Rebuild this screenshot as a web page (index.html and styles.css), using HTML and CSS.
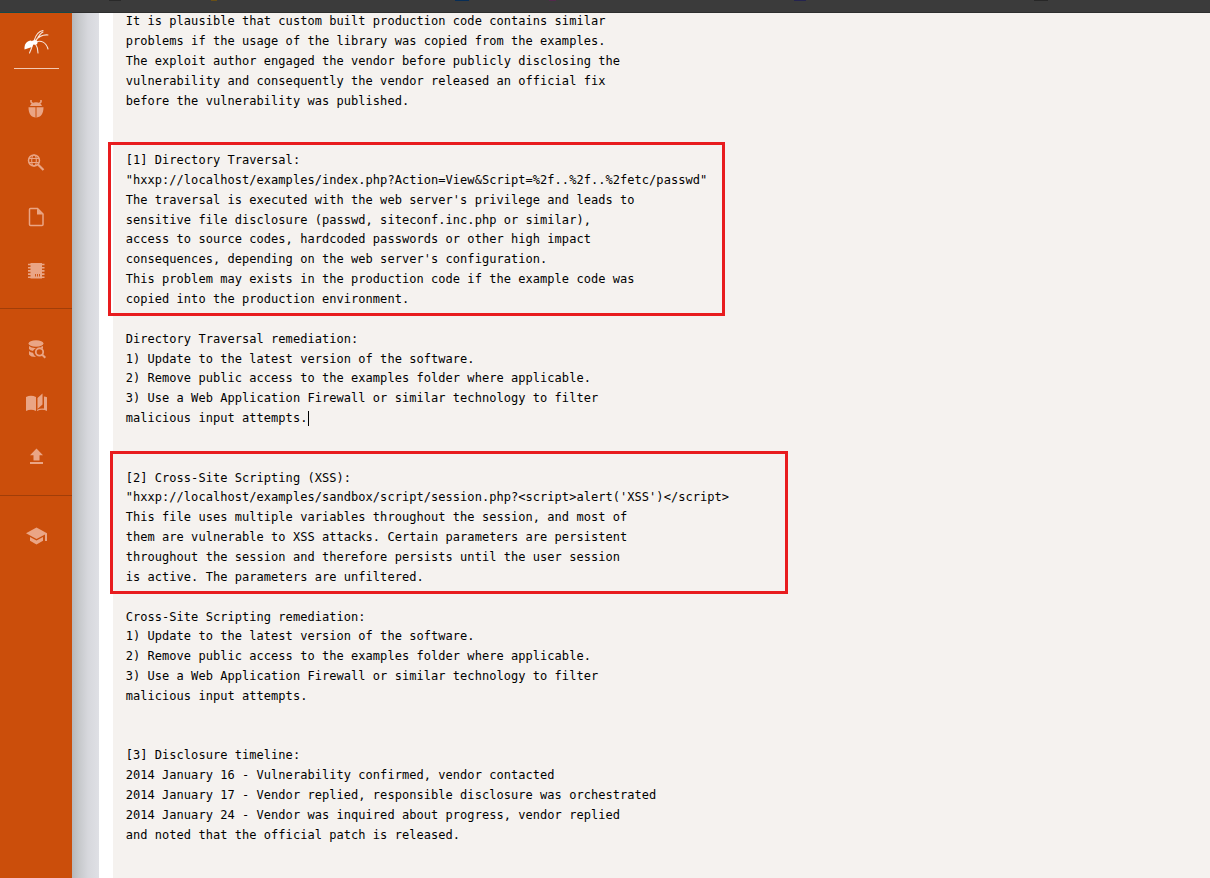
FILE: index.html
```html
<!DOCTYPE html>
<html lang="en">

	<head>
		<meta charset="UTF-8">
		<title>Advisory</title>
		<link rel="stylesheet" href="styles.css">
	</head>

	<body>
		<div class="topbar">
			<i class="tab tab-grey"></i>
			<i class="tab tab-yellow"></i>
			<i class="tab tab-blue"></i>
			<i class="tab tab-pink"></i>
			<i class="tab tab-navy"></i>
			<i class="tab tab-dark"></i>
		</div>
		<div class="page">
			<div class="sidebar">
				<a class="logo" href="#">
					<svg width="28" height="26" viewBox="0 0 28 26" fill="none" stroke="#fff" stroke-linecap="round">
						<path d="M1.500 20.500C1 15 4 11.500 8 11.500L11 14 9 18 6 19z" fill="#fff" stroke="none" />
						<ellipse cx="11.500" cy="13.500" rx="3" ry="2.200" fill="#fff" stroke="none" />
						<path d="M11 12C13 5 16 2 20 1.500M12 12C16 7 20 5.500 25 6M13 13C18 11 23 13 25 20M12 14C14 17 15 20 15 24M10 14C9 18 8 21 6.500 24M13 12C15 8 17 4 20 3" stroke-width="1.100" opacity=".85" />
					</svg>
				</a>
				<ul class="menu">
					<li>
						<svg width="22" height="22" viewBox="0 0 22 22">
							<path d="M3.500 9.200H18.500C18.500 15.500 16 19.500 11 19.500S3.500 15.500 3.500 9.200zM5 8C6 5.500 8 4.300 11 4.300S16 5.500 17 8z" />
							<path d="M6 2V4L8 5.800M16 2V4L14 5.800" fill="none" stroke="#eaa585" stroke-width="1.600" />
							<path d="M11 9V19.500" stroke="#cb4e0b" stroke-width="1" />
						</svg>
					</li>
					<li>
						<svg class="outline" width="22" height="22" viewBox="0 0 22 22">
							<circle cx="9" cy="8.500" r="5.500" stroke-width="1.500" />
							<ellipse cx="9" cy="8.500" rx="2.300" ry="5.500" stroke-width="1.100" />
							<path d="M4 6.500H14M4 10.500H14" stroke-width="1.100" />
							<path d="M13 12.500L18.500 18" stroke-width="2.200" />
						</svg>
					</li>
					<li>
						<svg width="22" height="22" viewBox="0 0 22 22">
							<path d="M5.500 2.500H12.500L18 8V18.500Q18 19.500 17 19.500H5.500Q4.500 19.500 4.500 18.500V3.500Q4.500 2.500 5.500 2.500z" fill="none" stroke="#eaa585" stroke-width="1.500" />
							<path d="M12 2.500V8.500H18z" />
						</svg>
					</li>
					<li>
						<svg width="22" height="22" viewBox="0 0 22 22">
							<path d="M5.500 3H17V18.500H5.500z" />
							<path d="M3 4.500H19.500M3 7.700H19.500M3 10.900H19.500M3 14.100H19.500M3 17.300H19.500" stroke="#eaa585" stroke-width="1.600" />
							<path d="M10.500 14V16.500M12.500 14V16.500M14.500 14V16.500" stroke="#cb4e0b" stroke-width=".9" />
						</svg>
					</li>
				</ul>
				<ul class="menu">
					<li>
						<svg width="22" height="22" viewBox="0 0 22 22">
							<ellipse cx="11" cy="5.500" rx="7.500" ry="3.300" />
							<path d="M4 8Q7 10.500 11 10Q8.500 11.500 8 13Q5 12.500 4 11zM4 13Q5.500 14.500 8 14.700Q8.500 17 11 19Q5.500 19 4 16.500z" />
							<circle cx="14.500" cy="14" r="3.700" fill="none" stroke="#eaa585" stroke-width="1.800" />
							<path d="M17 16.500L20.300 19.800" stroke="#eaa585" stroke-width="2" />
							<path d="M11.500 9.800Q15 9.700 18 8V11Q15.500 8.500 11.500 9.800z" />
						</svg>
					</li>
					<li>
						<svg width="22" height="22" viewBox="0 0 22 22">
							<path d="M1 5Q6 2.500 11 5V19Q6 16.500 1 19zM12.500 6L17.500 1.500V12.500L12.500 17z" />
							<path d="M19 4.500Q20.500 4.500 22 5.300V19Q17 16.500 12 19V17.800Q15 16 19 16.500z" />
						</svg>
					</li>
					<li>
						<svg width="22" height="22" viewBox="0 0 22 22">
							<path d="M11.500 2.500L18 9.300H14.500V14.500H8.500V9.300H5zM5 16H18V18H5z" />
						</svg>
					</li>
				</ul>
				<ul class="menu">
					<li>
						<svg width="22" height="22" viewBox="0 0 22 22">
							<path d="M11.500 2.500L22 8.300V16H20V9.500L11.500 14 1 8.300zM5 12L11.500 15.600 18 12V15.800L11.500 19.500 5 15.800z" />
						</svg>
					</li>
				</ul>
			</div>
			<div class="gutter"></div>
			<div class="content">
<pre class="advisory">It is plausible that custom built production code contains similar
problems if the usage of the library was copied from the examples.
The exploit author engaged the vendor before publicly disclosing the
vulnerability and consequently the vendor released an official fix
before the vulnerability was published.


[1] Directory Traversal:
"hxxp://localhost/examples/index.php?Action=View&amp;Script=%2f..%2f..%2fetc/passwd"
The traversal is executed with the web server's privilege and leads to
sensitive file disclosure (passwd, siteconf.inc.php or similar),
access to source codes, hardcoded passwords or other high impact
consequences, depending on the web server's configuration.
This problem may exists in the production code if the example code was
copied into the production environment.

Directory Traversal remediation:
1) Update to the latest version of the software.
2) Remove public access to the examples folder where applicable.
3) Use a Web Application Firewall or similar technology to filter
malicious input attempts.<span class="caret"></span>


[2] Cross-Site Scripting (XSS):
"hxxp://localhost/examples/sandbox/script/session.php?&lt;script&gt;alert('XSS')&lt;/script&gt;
This file uses multiple variables throughout the session, and most of
them are vulnerable to XSS attacks. Certain parameters are persistent
throughout the session and therefore persists until the user session
is active. The parameters are unfiltered.

Cross-Site Scripting remediation:
1) Update to the latest version of the software.
2) Remove public access to the examples folder where applicable.
3) Use a Web Application Firewall or similar technology to filter
malicious input attempts.


[3] Disclosure timeline:
2014 January 16 - Vulnerability confirmed, vendor contacted
2014 January 17 - Vendor replied, responsible disclosure was orchestrated
2014 January 24 - Vendor was inquired about progress, vendor replied
and noted that the official patch is released.</pre>
				<div class="mark mark-traversal"></div>
				<div class="mark mark-xss"></div>
			</div>
		</div>
	</body>

</html>
```
FILE: styles.css
```css
* {
	box-sizing: border-box;
	margin: 0;
	padding: 0;
	list-style: none;
}

body {
	height: 878px;
	overflow: hidden;
	display: flex;
	flex-direction: column;
	background: #f5f2ef;
	font-family: "DejaVu Sans Mono", monospace;
}

.topbar {
	display: flex;
	flex: none;
	height: 13px;
	background: #3b3b3b;
	border-bottom: 1px solid #2d2e2e;
}

/* bottom edges of the tab icons */
.tab {
	width: 12px;
	height: 1px;
}

.tab-grey {
	margin-left: 109px;
	background: #292929;
}

.tab-yellow {
	width: 6px;
	margin-left: 90px;
	background: #695016;
}

.tab-blue {
	width: 14px;
	margin-left: 238px;
	background: #072d56;
}

.tab-pink {
	width: 7px;
	margin-left: 80px;
	background: #54284d;
}

.tab-navy {
	margin-left: 238px;
	background: #24234f;
}

.tab-dark {
	width: 14px;
	margin-left: 228px;
	background: #272727;
}

.page {
	display: flex;
	flex: 1;
	min-height: 0;
}

.sidebar {
	width: 72px;
	flex: none;
	background: #cb4e0b;
	box-shadow: 0 -1px #164747;
}

.logo {
	display: block;
	width: 45px;
	height: 56px;
	margin-left: 14px;
	padding: 16px 0 0 9px;
	border-bottom: 1px solid #f3c9b3;
}

.menu {
	display: flex;
	flex-direction: column;
	gap: 32px;
	padding: 29px 0 26px 25px;
	border-bottom: 1px solid #a13e09;
}

.menu + .menu {
	padding-bottom: 27px;
}

.menu:last-child {
	border-bottom: 0;
}

.menu li {
	height: 22px;
}

.menu svg {
	display: block;
	fill: #eaa585;
}

.menu .outline {
	fill: none;
	stroke: #eaa585;
}

.gutter {
	width: 27px;
	flex: none;
	background: linear-gradient(90deg, #b6b8bb 0, #c6c8cb 25%, #d7d8dd 60%, #dfe0e5 100%);
}

.content {
	position: relative;
	flex: 1;
	border-left: 14px solid #fff;
	background: #f5f2ef;
}

.advisory {
	margin-top: -.8px;
	padding-left: 12.700px;
	font-family: "DejaVu Sans Mono", monospace;
	font-size: 12px;
	line-height: 19.850px;
	letter-spacing: .045px;
	color: #000;
}

.caret {
	display: inline-block;
	width: 1px;
	height: 15px;
	margin-left: 1px;
	vertical-align: -4px;
	background: #000;
}

.mark {
	position: absolute;
	border: 3px solid #e81c1e;
}

.mark-traversal {
	left: -5px;
	top: 129px;
	width: 617px;
	height: 174px;
}

.mark-xss {
	left: -3px;
	top: 438px;
	width: 678px;
	height: 143px;
}
```
